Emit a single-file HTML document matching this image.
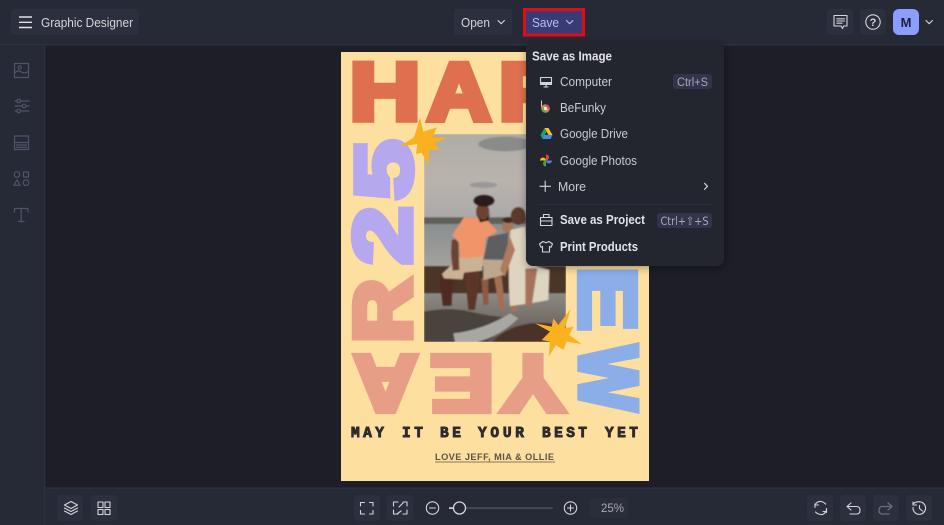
<!DOCTYPE html>
<html><head><meta charset="utf-8"><title>Graphic Designer</title>
<style>
html,body{margin:0;padding:0;background:#1d1e26;width:944px;height:525px;overflow:hidden}
svg{display:block}
text{font-family:"Liberation Sans","DejaVu Sans",sans-serif}
.ui{fill:#d3d5dc;font-size:12.5px}
.m{fill:#c9cbd3;font-size:12.5px}
.b{fill:#e2e3e8;font-size:12.5px;font-weight:bold}
.ic{fill:none;stroke:#d5d6dc;stroke-width:1.1;stroke-linecap:round;stroke-linejoin:round}
.side{fill:none;stroke:#50546a;stroke-width:1.2;stroke-linecap:round;stroke-linejoin:round}
.btn{fill:#2c2f3d}
.big{font-weight:bold;font-size:100px;stroke-width:8;stroke-linejoin:miter;stroke-miterlimit:3}
.or{fill:#de7050;stroke:#de7050}
.pu{fill:#b6a8ee;stroke:#b6a8ee}
.pk{fill:#e89d87;stroke:#e89d87}
.bl{fill:#8bade8;stroke:#8bade8}
text.tag{font-family:"Liberation Mono",monospace;font-weight:bold;font-size:14.5px;fill:#2e2b2e;stroke:#2e2b2e;stroke-width:.9}
</style></head><body>
<svg width="944" height="525" viewBox="0 0 944 525" xmlns="http://www.w3.org/2000/svg">
<defs><filter id="bl" x="-5%" y="-5%" width="110%" height="110%"><feGaussianBlur stdDeviation="2.4"/></filter>
<filter id="sh" x="-10%" y="-10%" width="120%" height="120%"><feGaussianBlur stdDeviation="4"/></filter>
<linearGradient id="sky" x1="0" y1="0" x2="0" y2="1"><stop offset="0" stop-color="#aeaca7"/><stop offset=".55" stop-color="#b9b3ac"/><stop offset="1" stop-color="#aaa8a8"/></linearGradient>
<linearGradient id="wat" x1="0" y1="0" x2="0" y2="1"><stop offset="0" stop-color="#8a8e8f"/><stop offset="1" stop-color="#a3a29e"/></linearGradient>
<linearGradient id="low" x1="0" y1="0" x2="0" y2="1"><stop offset="0" stop-color="#8c8984"/><stop offset="1" stop-color="#5f5650"/></linearGradient>
<clipPath id="ph"><rect x="424" y="134" width="142" height="208"/></clipPath>
</defs>
<rect width="944" height="525" fill="#1d1e26"/>

<!-- poster -->
<rect x="341" y="52" width="308" height="429" fill="#fddf9f"/>
<!-- photo: drawn in 3x coordinates -->
<g clip-path="url(#ph)">
<g transform="translate(420,130) scale(.3333)">
<g filter="url(#bl)">
<rect x="12" y="12" width="426" height="256" fill="url(#sky)"/>
<ellipse cx="255" cy="42" rx="80" ry="22" fill="#8b8b89"/>
<ellipse cx="190" cy="165" rx="42" ry="9" fill="#9a9896"/>
<rect x="12" y="262" width="426" height="20" fill="#5f6059"/>
<rect x="12" y="282" width="426" height="130" fill="url(#wat)"/>
<rect x="12" y="408" width="426" height="98" fill="#4b3527"/>
<rect x="12" y="490" width="426" height="146" fill="url(#low)"/>
<path d="M12 545Q90 530 150 545T290 565Q240 610 200 636H12Z" fill="#4a423c"/>
<path d="M100 610Q190 600 270 550L295 565Q240 620 170 636H105Z" fill="#a9a7a2"/>
<path d="M215 636Q260 590 330 580Q400 575 438 590V636Z" fill="#4c3325"/>
<!-- man legs -->
<path d="M58 450Q70 432 105 438L98 470 95 528H68L62 480Z" fill="#4f2c20"/>
<path d="M135 425L178 425 176 470 165 540H145L138 470Z" fill="#5c3426"/>
<path d="M66 432Q100 400 122 378L190 376 186 422 132 428 128 448 72 445Z" fill="#cbb295"/>
<!-- man torso -->
<path d="M95 330L115 325 118 420 98 422 93 370Z" fill="#6d4230"/>
<path d="M97 315L132 262 195 262 232 305 197 325 192 380 120 385 118 340Z" fill="#f0946a"/>
<ellipse cx="188" cy="245" rx="20" ry="26" fill="#6e4330"/>
<ellipse cx="192" cy="212" rx="32" ry="18" fill="#2a1f1c"/>
<path d="M170 250Q190 290 210 250L205 272 180 277Z" fill="#231a18"/>
<!-- boy -->
<path d="M222 440L245 440 255 535 238 535Z" fill="#a56e52"/>
<path d="M184 445L205 445 205 525 190 525Z" fill="#8d5a42"/>
<path d="M190 390L250 390 252 435 190 450Z" fill="#bda88d"/>
<path d="M205 320L265 308 262 390 190 388Z" fill="#5d5d62"/>
<ellipse cx="263" cy="288" rx="17" ry="20" fill="#a87456"/>
<ellipse cx="265" cy="270" rx="18" ry="9" fill="#3a2a22"/>
<!-- woman -->
<path d="M272 520L295 520 290 545 273 540Z" fill="#a7725a"/>
<path d="M272 300L315 290 320 340 350 410 388 420 385 510 330 520 270 528Q262 420 272 300Z" fill="#ded5c0"/>
<path d="M316 415L352 415 335 530 316 530Z" fill="#a7725a"/>
<path d="M270 320L240 420 255 440 285 360Z" fill="#b07a5e"/>
<ellipse cx="295" cy="258" rx="23" ry="27" fill="#5a3a2c"/>
</g>
</g>
</g>

<!-- big letters -->
<g class="big">
<g transform="translate(353,61) scale(.976,.807) translate(-3.3,72.8)"><text class="or">H</text></g>
<g transform="translate(424,61) scale(.873,.807) translate(4,72.8)"><text class="or">A</text></g>
<g transform="translate(502,61) scale(.957,.807) translate(-3.3,72.8)"><text class="or">P</text></g>

<g transform="translate(353,200) rotate(-90) scale(1.064,.794) translate(.6,72.8)"><text class="pu">5</text></g>
<g transform="translate(352,265) rotate(-90) scale(1.038,.807) translate(.6,72.8)"><text class="pu">2</text></g>
<g transform="translate(352,340) rotate(-90) scale(.887,.807) translate(-3.3,72.8)"><text class="pk">R</text></g>

<g transform="translate(421,414) rotate(180) scale(.885,.794) translate(4,72.8)"><text class="pk">A</text></g>
<g transform="translate(491,414) rotate(180) scale(.957,.794) translate(-3.3,72.8)"><text class="pk">E</text></g>
<g transform="translate(567,414) rotate(180) scale(.948,.794) translate(2.5,72.8)"><text class="pk">Y</text></g>

<g transform="translate(638,270) rotate(90) scale(.957,.794) translate(-3.3,72.8)"><text class="bl">E</text></g>
<g transform="translate(639,343) rotate(90) scale(.689,.807) translate(3.6,72.8)"><text class="bl">W</text></g>
</g>

<!-- stars -->
<g transform="translate(340,50) scale(.3333)"><polygon fill="#fbb11f" points="240,203 250,245 290,232 278,262 322,262 285,280 297,300 268,298 265,345 245,308 228,312 232,282 178,290 222,262"/></g>
<g transform="translate(340,260) scale(.3333)"><polygon fill="#fbb11f" points="692,147 675,205 700,200 688,225 725,252 680,245 670,270 648,255 626,290 630,245 605,240 630,215 585,190 635,200 640,175 655,195"/></g>

<!-- poster small text -->
<text class="tag" x="351" y="437" textLength="33" lengthAdjust="spacing">MAY</text>
<text class="tag" x="402" y="437" textLength="21" lengthAdjust="spacing">IT</text>
<text class="tag" x="440" y="437" textLength="21" lengthAdjust="spacing">BE</text>
<text class="tag" x="478" y="437" textLength="46" lengthAdjust="spacing">YOUR</text>
<text class="tag" x="542" y="437" textLength="45" lengthAdjust="spacing">BEST</text>
<text class="tag" x="605" y="437" textLength="33" lengthAdjust="spacing">YET</text>
<text x="435" y="460" textLength="119" lengthAdjust="spacing" font-size="9.2" font-weight="bold" fill="#5b5344">LOVE JEFF, MIA &amp; OLLIE</text>
<rect x="435" y="461.5" width="120" height="1" fill="#86775a"/>

<!-- top bar -->
<rect x="0" y="0" width="944" height="44" fill="#262936"/>
<rect x="0" y="44" width="944" height="1.5" fill="#2e3140"/>
<rect x="0" y="45" width="44" height="480" fill="#262936"/>
<rect x="44" y="45" width="1.3" height="480" fill="#2e3140"/>
<rect x="45" y="488" width="899" height="37" fill="#262936"/>
<rect x="45" y="487.5" width="899" height="1.2" fill="#2e3140"/>

<rect class="btn" x="11" y="9" width="128" height="26" rx="4"/>
<path d="M19 17H32M19 22.3H32M19 27.5H32" stroke="#e1e2e7" stroke-width="1.4" fill="none"/>
<text class="ui" x="41" y="27" textLength="92" lengthAdjust="spacingAndGlyphs" style="font-size:13px">Graphic Designer</text>

<rect class="btn" x="454" y="9" width="58" height="26" rx="3"/>
<text class="ui" x="461" y="27" textLength="29" lengthAdjust="spacingAndGlyphs">Open</text>
<path d="M498 20.5l3.2 3.2 3.2-3.2" class="ic"/>

<rect x="524.5" y="9.5" width="59" height="25.5" fill="#3a3a74" stroke="#e00c18" stroke-width="3"/>
<text x="532" y="27" textLength="27" lengthAdjust="spacingAndGlyphs" font-size="12.5" fill="#b9bdf2">Save</text>
<path d="M566.5 20.5l3.2 3.2 3.2-3.2" fill="none" stroke="#b9bdf2" stroke-width="1.1" stroke-linecap="round" stroke-linejoin="round"/>

<rect class="btn" x="827" y="9" width="26" height="26" rx="4"/>
<path d="M834 15.5H847V26H843.5L842.5 28.5L841 26H834Z" class="ic"/><path d="M836.8 18.8H844.5M836.8 21H844.5M836.8 23.2H842" class="ic" stroke-width="1"/>
<rect class="btn" x="860" y="9" width="26" height="26" rx="4"/>
<circle cx="873" cy="22" r="7.2" class="ic"/>
<text x="873" y="26" font-size="11" font-weight="bold" fill="#d5d6dc" text-anchor="middle">?</text>
<rect x="893" y="9" width="26" height="26" rx="6" fill="#8c9dfb"/>
<text x="906" y="27" font-size="13" font-weight="bold" fill="#1d1f3d" text-anchor="middle">M</text>
<path d="M926 20.5l3.2 3.2 3.2-3.2" class="ic"/>

<!-- side icons -->
<rect x="14.5" y="63.5" width="14" height="14" class="side"/>
<circle cx="19.7" cy="67.5" r="1.6" class="side"/><path d="M14.5 73Q18 69.5 21.5 72T28.5 71" class="side"/>
<path d="M15 101H29M15 106H29M15 111H29" class="side"/>
<circle cx="18.7" cy="101" r="1.8" class="side" style="fill:#262936"/><circle cx="24" cy="106" r="1.8" style="fill:#262936" class="side"/><circle cx="18.7" cy="111" r="1.8" style="fill:#262936" class="side"/>
<rect x="14.5" y="136" width="14" height="13.5" class="side"/><path d="M14.5 142.5H28.5M16.5 145H26.5M16.5 147.3H26.5" class="side" stroke-width="1"/>
<circle cx="17" cy="174.5" r="2.8" class="side"/><rect x="23.5" y="172" width="5" height="5" class="side"/><path d="M17 179.7L20 185.3H14Z" class="side"/><circle cx="26" cy="182.7" r="2.8" class="side"/>
<path d="M14.5 212V208.5H28V212M21.2 208.5V221.5M18.5 221.5H24" class="side"/>

<!-- bottom left -->
<rect class="btn" x="57" y="495" width="26" height="26" rx="4"/>
<path d="M71 501.5L77.5 505L71 508.5L64.5 505ZM64.5 508L71 511.5L77.5 508M64.5 511L71 514.5L77.5 511" class="ic"/>
<rect class="btn" x="91" y="495" width="26" height="26" rx="4"/>
<path d="M98 502h5v5.500h-5zM105 502h5v5.500h-5zM98 509.500h5v5h-5zM105 509.500h5v5h-5z" class="ic"/>

<!-- zoom controls -->
<rect class="btn" x="354" y="495" width="26" height="26" rx="4"/>
<path d="M360.5 506V502.5H364.5M369.500 502.500H373V506M360.500 510.500V514H364.500M373 510.500V514H369.500" class="ic"/>
<rect class="btn" x="387" y="495" width="26" height="26" rx="4"/>
<path d="M393.500 506V502H398M407 506V502H403M393.500 510V514H398M407 510V514H403M399 507L403 503M401 511L397 514" class="ic"/>
<circle cx="432.500" cy="508" r="6.200" class="ic"/><path d="M429.500 508H435.500" class="ic"/>
<rect x="449" y="507.300" width="104" height="1.600" rx=".8" fill="#4a4c5a"/>
<rect x="449" y="507.300" width="8" height="1.600" fill="#d5d6dc"/>
<circle cx="459.500" cy="508" r="6" fill="#262936" stroke="#d5d6dc" stroke-width="1.300"/>
<circle cx="570.500" cy="508" r="6.200" class="ic"/><path d="M567.500 508H573.500M570.500 505V511" class="ic"/>
<rect x="590" y="498" width="38" height="20" rx="3" fill="#2a2d3a"/>
<text x="624" y="512" text-anchor="end" font-size="11.500" fill="#a9abb5">25%</text>

<!-- bottom right -->
<rect class="btn" x="807" y="495" width="26" height="26" rx="4"/>
<path d="M815 505Q817 501 821 501.500Q824 502 825.500 504M815 504V507.500M826 511Q824.500 515 820.500 514.500Q817.500 514 815.500 512M826.500 512.500V508.500M815 505H818.500M826.500 511.500H823" class="ic"/>
<rect class="btn" x="840" y="495" width="26" height="26" rx="4"/>
<path d="M851 503L847 506.500L851 510M847 506.500H856.500Q860 506.500 860 510.500Q860 514 856.500 514H850" class="ic"/>
<rect class="btn" x="873" y="495" width="26" height="26" rx="4"/>
<path d="M888 503L892 506.500L888 510M892 506.500H882.500Q879 506.500 879 510.500Q879 514 882.500 514H889" fill="none" stroke="#6c6e79" stroke-width="1.300" stroke-linecap="round" stroke-linejoin="round"/>
<rect class="btn" x="906" y="495" width="26" height="26" rx="4"/>
<path d="M913.500 503.500Q917 501 921 502A6.300 6.300 0 1 1 913 507.500M913 502V505H916.500M919.500 505.500V508.500L922.500 511" class="ic"/>

<!-- menu -->
<rect x="526" y="44" width="198" height="224" rx="7" fill="#000" opacity=".35" filter="url(#sh)"/>
<rect x="526" y="42" width="198" height="224" rx="7" fill="#23252f"/>
<text class="b" x="532" y="60.500" textLength="80" lengthAdjust="spacingAndGlyphs">Save as Image</text>

<path d="M540.500 77.500H551.500V84.500H540.500ZM544 87H548M546 84.500V87" class="ic"/><rect x="540.500" y="82" width="11" height="2.500" fill="#d5d6dc"/>
<text class="m" x="560" y="86" textLength="52" lengthAdjust="spacingAndGlyphs">Computer</text>
<rect x="673" y="74" width="39" height="15" rx="3" fill="#31344a"/>
<text x="677" y="86" textLength="31" lengthAdjust="spacingAndGlyphs" font-size="11.500" fill="#a6a9b8">Ctrl+S</text>

<path d="M541.500 100.500V107" stroke="#cfd0d6" stroke-width="1" fill="none"/>
<circle cx="545.500" cy="108.500" r="4.300" fill="#d98d3c"/><path d="M545.500 104.200A4.300 4.300 0 0 1 549.800 108.500H545.500Z" fill="#c14b8f"/><path d="M545.500 112.800A4.300 4.300 0 0 1 541.200 108.500H545.500Z" fill="#5aa05a"/><circle cx="545.500" cy="108.500" r="1.700" fill="#f0e6d8"/>
<text class="m" x="560" y="112" textLength="46" lengthAdjust="spacingAndGlyphs">BeFunky</text>

<path d="M544.500 128H548.500L552.500 135H548.500Z" fill="#f7c428"/><path d="M544.500 128L540.500 135L542.500 139L546.500 132Z" fill="#1fa463"/><path d="M542.500 139H550.500L552.500 135H544.500Z" fill="#4687f5"/>
<text class="m" x="560" y="138" textLength="68" lengthAdjust="spacingAndGlyphs">Google Drive</text>

<path d="M546 160.500V154.500A3 3 0 0 1 546 160.500Z" fill="#ea4335"/><path d="M546 160.500H552A3 3 0 0 1 546 160.500Z" fill="#4285f4"/><path d="M546 160.500V166.500A3 3 0 0 1 546 160.500Z" fill="#34a853"/><path d="M546 160.500H540A3 3 0 0 1 546 160.500Z" fill="#fbbc05"/>
<text class="m" x="560" y="165" textLength="77" lengthAdjust="spacingAndGlyphs">Google Photos</text>

<path d="M540 186.300H550.500M545.200 181V191.500" class="ic"/>
<text class="m" x="558" y="191" textLength="28" lengthAdjust="spacingAndGlyphs">More</text>
<path d="M704.500 183.300l3 3-3 3" class="ic"/>

<rect x="538" y="204" width="174" height="1" fill="#2c2e3a"/>

<path d="M540.500 217.500H552V225.500H540.500ZM543.500 217.500V214.500H549V217.500M540.500 221H552" class="ic"/>
<text class="b" x="560" y="224" textLength="85" lengthAdjust="spacingAndGlyphs">Save as Project</text>
<rect x="657" y="213" width="55" height="15" rx="3" fill="#31344a"/>
<text x="660.500" y="225" textLength="48" lengthAdjust="spacingAndGlyphs" font-size="11.500" fill="#a6a9b8" style="font-family:'DejaVu Sans',sans-serif">Ctrl+⇧+S</text>

<path d="M543 241.500L546 242.800 549 241.500 552.500 244 551 247.300 549.500 246.500V252H542.500V246.500L541 247.300 539.500 244Z" class="ic"/>
<text class="b" x="560" y="251" textLength="78" lengthAdjust="spacingAndGlyphs">Print Products</text>
</svg>
</body></html>
